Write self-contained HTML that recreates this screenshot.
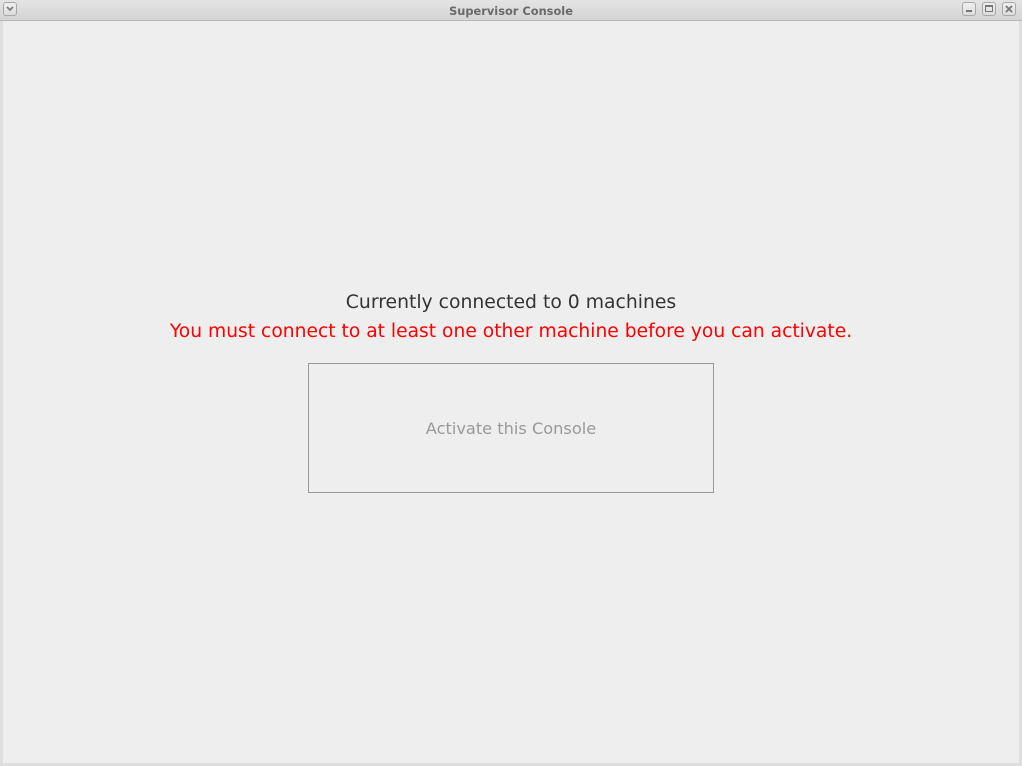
<!DOCTYPE html>
<html><head><style>
body{margin:0;width:1022px;height:766px;background:#eeeeee;font-family:"DejaVu Sans","Liberation Sans",sans-serif;position:relative;overflow:hidden}
.tb{position:absolute;left:0;top:0;width:1022px;height:20px;background:linear-gradient(#e4e4e4,#d4d4d4);border-bottom:1px solid #b8b8b8;}
.tt{position:absolute;left:0;width:1022px;top:4px;text-align:center;font-size:11.4px;font-weight:bold;color:#6a6a6a}
.b{position:absolute;top:2px;width:14px;height:14px;border:1px solid #a8a8a8;border-radius:3px;background:linear-gradient(#f0f0f0,#dcdcdc);box-sizing:border-box}
.l{position:absolute;left:0;top:21px;width:3px;height:745px;background:#dedede}
.r{position:absolute;right:0;top:21px;width:3px;height:745px;background:#dedede}
.bt{position:absolute;left:0;bottom:0;width:1022px;height:3px;background:#dedede}
.t1{position:absolute;left:0;width:1022px;top:292px;text-align:center;font-size:18.8px;color:#333}
.t2{position:absolute;left:0;width:1022px;top:321px;text-align:center;font-size:18.7px;color:#ff0000}
.btn{position:absolute;left:308px;top:363px;width:406px;height:130px;border:1px solid #999;box-sizing:border-box;text-align:center;line-height:130px;font-size:16.2px;color:#999}
</style></head><body>
<div class="tb"></div>
<div class="b" style="left:3px"><svg width="12" height="12" style="position:absolute;left:0;top:0"><path d="M3 4 L6 7 L9 4" stroke="#777" stroke-width="1.6" fill="none"/></svg></div>
<div class="tt">Supervisor Console</div>
<div class="b" style="left:962px"><div style="position:absolute;left:3px;top:7px;width:6px;height:2px;background:#777"></div></div>
<div class="b" style="left:982px"><div style="position:absolute;left:2px;top:2px;width:8px;height:7px;border:1px solid #777;border-top-width:2px;box-sizing:border-box"></div></div>
<div class="b" style="left:1002px"><svg width="12" height="12" style="position:absolute;left:0;top:0"><path d="M3 3 L9 9 M9 3 L3 9" stroke="#777" stroke-width="1.8"/></svg></div>
<div class="l"></div><div class="r"></div><div class="bt"></div>
<div class="t1">Currently connected to 0 machines</div>
<div class="t2">You must connect to at least one other machine before you can activate.</div>
<div class="btn">Activate this Console</div>
</body></html>
